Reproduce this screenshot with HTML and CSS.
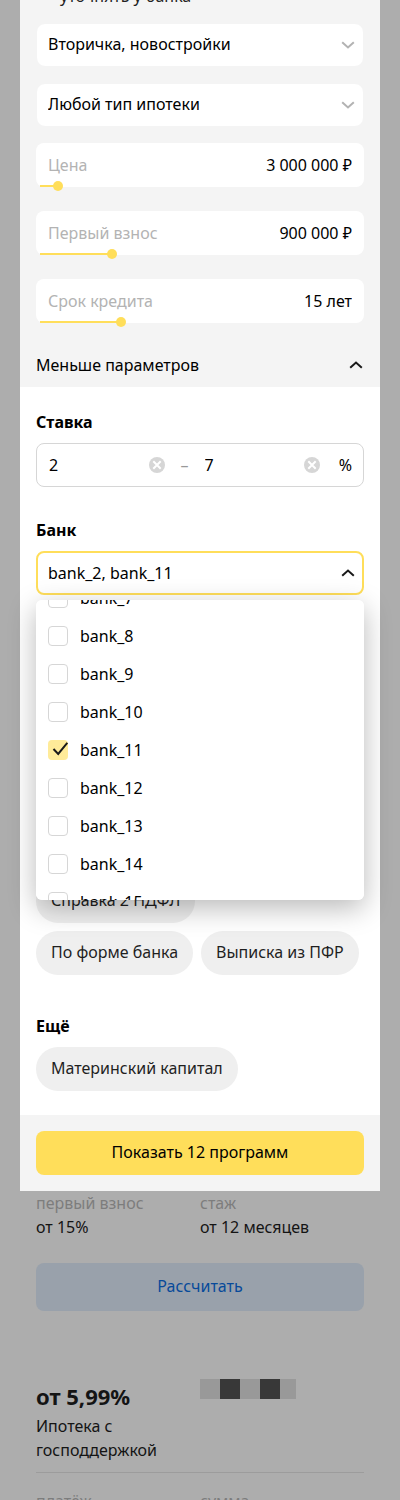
FILE: index.html
```html
<!DOCTYPE html>
<html lang="ru">
<head>
<meta charset="utf-8">
<meta name="viewport" content="width=device-width, initial-scale=1">
<title>Ипотека</title>
<link rel="stylesheet" href="styles.css">
</head>
<body>
<div class="modal" role="dialog" aria-label="Параметры">
  <div class="basic">
    <p class="note">уточнять у банка</p>
    <div class="pick">
      <select class="pick-control" aria-label="Тип жилья"><option>Вторичка, новостройки</option></select>
      <svg class="chevron muted" viewBox="0 0 14 8"><path d="M1.200 1.200 7 6.500l5.800-5.300"/></svg>
    </div>
    <div class="pick">
      <select class="pick-control" aria-label="Тип ипотеки"><option>Любой тип ипотеки</option></select>
      <svg class="chevron muted" viewBox="0 0 14 8"><path d="M1.200 1.200 7 6.500l5.800-5.300"/></svg>
    </div>
    <div class="amounts">
      <div class="amount">
        <label for="price">Цена</label>
        <input class="amount-value" id="price" type="text" value="3 000 000 ₽">
        <input class="slider" type="range" aria-label="Цена" min="0" max="100" step="any" value="5.4" style="--fill: 22px">
      </div>
      <div class="amount">
        <label for="deposit">Первый взнос</label>
        <input class="amount-value" id="deposit" type="text" value="900 000 ₽">
        <input class="slider" type="range" aria-label="Первый взнос" min="0" max="100" step="any" value="22.4" style="--fill: 76px">
      </div>
      <div class="amount">
        <label for="term">Срок кредита</label>
        <input class="amount-value" id="term" type="text" value="15 лет">
        <input class="slider" type="range" aria-label="Срок кредита" min="0" max="100" step="any" value="25.2" style="--fill: 85px">
      </div>
    </div>
    <button class="toggle" type="button">Меньше параметров
      <svg class="chevron" viewBox="0 0 14 8"><path d="M1.200 6.800 7 1.500l5.800 5.300"/></svg>
    </button>
  </div>

  <div class="extra">
    <section class="group">
      <h2>Ставка</h2>
      <div class="rate">
        <input type="text" value="2" aria-label="Ставка от">
        <button class="clear" type="button" aria-label="Очистить"><svg viewBox="0 0 16 16"><circle cx="8" cy="8" r="8"/><path d="m4.300 4.300 7.400 7.400m0-7.400-7.400 7.400"/></svg></button>
        <span class="dash">–</span>
        <input type="text" value="7" aria-label="Ставка до">
        <button class="clear" type="button" aria-label="Очистить"><svg viewBox="0 0 16 16"><circle cx="8" cy="8" r="8"/><path d="m4.300 4.300 7.400 7.400m0-7.400-7.400 7.400"/></svg></button>
        <span class="percent">%</span>
      </div>
    </section>

    <section class="group">
      <h2>Банк</h2>
      <div class="bank">
        <button class="bank-control" type="button" aria-expanded="true">bank_2, bank_11
          <svg class="chevron" viewBox="0 0 14 8"><path d="M1.200 6.800 7 1.500l5.800 5.300"/></svg>
        </button>
        <div class="menu">
          <div class="menu-list">
            <label class="option"><input type="checkbox">bank_7</label>
            <label class="option"><input type="checkbox">bank_8</label>
            <label class="option"><input type="checkbox">bank_9</label>
            <label class="option"><input type="checkbox">bank_10</label>
            <label class="option"><span class="tick"><input type="checkbox" checked><svg viewBox="0 0 20 20"><path d="m5.500 9 4.700 5L19.300 2.800"/></svg></span>bank_11</label>
            <label class="option"><input type="checkbox">bank_12</label>
            <label class="option"><input type="checkbox">bank_13</label>
            <label class="option"><input type="checkbox">bank_14</label>
            <label class="option"><input type="checkbox">bank_15</label>
          </div>
        </div>
      </div>
    </section>

    <section class="chips income">
      <button class="chip" type="button">Справка 2 НДФЛ</button>
      <button class="chip" type="button">По форме банка</button>
      <button class="chip" type="button">Выписка из ПФР</button>
    </section>

    <section class="group">
      <h2>Ещё</h2>
      <div class="chips"><button class="chip" type="button">Материнский капитал</button></div>
    </section>
  </div>

  <div class="footer"><button class="submit" type="button">Показать 12 программ</button></div>
</div>

<main class="results">
  <article class="offer">
    <dl class="facts">
      <div><dt>первый взнос</dt><dd>от 15%</dd></div>
      <div><dt>стаж</dt><dd>от 12 месяцев</dd></div>
    </dl>
    <button class="calculate" type="button">Рассчитать</button>
  </article>
  <article class="offer">
    <div class="summary">
      <div>
        <h3>от 5,99%</h3>
        <p>Ипотека с господдержкой</p>
      </div>
      <svg class="logo" viewBox="0 0 96 20" shape-rendering="crispEdges"><path class="logo-light" d="M0 0h96v20H0z"/><path class="logo-dark" d="M20 0h20v20H20zM60 0h20v20H60z"/></svg>
    </div>
    <dl class="facts more">
      <div><dt>платёж</dt></div>
      <div><dt>сумма</dt></div>
    </dl>
  </article>
</main>
</body>
</html>
```
FILE: styles.css
```css
* { box-sizing: border-box; }
html { height: 100%; overflow: hidden; }
body {
  height: 100%;
  margin: 0;
  overflow: hidden;
  background: #adadad;
  color: #000;
  font: 16px/20px "Noto Sans", "Liberation Sans", sans-serif;
}
button, input, select { font: inherit; color: inherit; margin: 0; }
button { border: 0; padding: 0; }
h2, h3, p, dl, dd { margin: 0; }

.modal { margin: 0 20px; background: #fff; }
.basic { padding: 0 16px; background: #f4f4f4; }
.note { margin-top: -14px; padding: 0 0 17px 24px; color: #222; }

.pick { display: grid; align-items: center; margin-bottom: 16px; }
.pick > * { grid-area: 1 / 1; }
.pick-control {
  width: 100%;
  height: 44px;
  padding: 0 40px 2px 11px;
  appearance: none;
  border: 1px solid #f4f4f4;
  border-radius: 9px;
  background: #fff;
}
.chevron {
  width: 14px;
  height: 8px;
  fill: none;
  stroke: #1a1a1a;
  stroke-width: 2;
}
.chevron.muted { stroke: #b3b3b3; }
.pick .chevron { justify-self: end; margin-right: 9px; pointer-events: none; }

.amounts { display: flex; flex-direction: column; gap: 24px; }
.amount {
  position: relative;
  display: flex;
  align-items: center;
  height: 44px;
  padding: 0 12px;
  border-radius: 8px;
  background: #fff;
}
.amount label { color: #b3b3b3; white-space: nowrap; }
.amount-value {
  flex: 1;
  min-width: 0;
  padding: 0;
  border: 0;
  background: none;
  text-align: right;
}
.slider {
  position: absolute;
  left: 0;
  bottom: -4px;
  width: 100%;
  height: 10px;
  appearance: none;
  background: none;
}
.slider::-webkit-slider-runnable-track {
  height: 10px;
  background: linear-gradient(#ffde5a, #ffde5a) 4px 4px / calc(var(--fill) - 4px) 2px no-repeat;
}
.slider::-webkit-slider-thumb {
  width: 10px;
  height: 10px;
  appearance: none;
  border-radius: 50%;
  background: #ffde5a;
}

.toggle {
  display: flex;
  align-items: center;
  justify-content: space-between;
  width: 100%;
  height: 44px;
  margin-top: 20px;
  padding-right: 1px;
  background: none;
}

.extra { padding: 25px 16px 24px; }
.group + .group { margin-top: 33px; }
h2 { margin-bottom: 11px; font-size: 16px; line-height: 20px; }
.rate {
  display: flex;
  align-items: center;
  height: 44px;
  padding: 0 11px 0 12px;
  border: 1px solid #d6d6d6;
  border-radius: 8px;
}
.rate input { flex: 1; min-width: 0; padding: 0; border: 0; background: none; }
.clear { display: flex; background: none; }
.clear svg { width: 16px; height: 16px; fill: #d6d6d6; stroke: #fff; stroke-width: 2; }
.clear circle { stroke: none; }
.dash { width: 40px; text-align: center; color: #999; }
.percent { width: 32px; text-align: right; }

.bank { position: relative; }
.bank-control {
  display: flex;
  align-items: center;
  justify-content: space-between;
  width: 100%;
  height: 44px;
  padding: 0 7px 0 10px;
  border: 2px solid #ffde5a;
  border-radius: 8px;
  background: #fff;
}
.menu {
  position: absolute;
  z-index: 1;
  top: 49px;
  left: 0;
  right: 0;
  height: 300px;
  overflow: hidden;
  border-radius: 6px;
  background: #fff;
}
.bank::after {
  content: "";
  position: absolute;
  top: 49px;
  left: 0;
  right: 0;
  height: 300px;
  border-radius: 6px;
  box-shadow: 0 8px 28px rgba(0, 0, 0, .28);
}
.menu-list { margin-top: -21px; }
.option { display: flex; align-items: center; gap: 12px; height: 38px; padding-left: 12px; }
.option input {
  width: 20px;
  height: 20px;
  appearance: none;
  border: 1px solid #d6d6d6;
  border-radius: 4px;
  background: #fff;
}
.option input:checked { border: 0; background: #ffeb99; }
.tick { display: grid; }
.tick > * { grid-area: 1 / 1; }
.tick svg { width: 20px; height: 20px; fill: none; stroke: #1a1a1a; stroke-width: 2; pointer-events: none; }

.chips { display: flex; flex-wrap: wrap; gap: 8px; }
.income { margin-top: 284px; }
.income + .group { margin-top: 41px; }
.chip {
  height: 44px;
  padding: 0 15px 2px;
  border-radius: 22px;
  background: #efefef;
  color: #1f1f1f;
}
.income .chip:first-child { margin-right: 100px; }

.footer { padding: 16px; background: #f4f4f4; }
.submit { width: 100%; height: 44px; padding-bottom: 2px; border-radius: 8px; background: #ffde5a; }

.results { padding: 0 36px; color: #141414; line-height: 24px; }
.facts, .summary { display: grid; grid-template-columns: 1fr 1fr; }
dt { color: #7d7d7d; }
.calculate {
  width: 100%;
  height: 48px;
  margin-top: 24px;
  padding-bottom: 2px;
  border-radius: 8px;
  background: #99a1ab;
  color: #074a9a;
}
.offer + .offer { margin-top: 68px; }
h3 { margin: 5px 0 6px; font-size: 22px; line-height: 24px; }
.logo { width: 96px; height: 20px; }
.logo-light { fill: #999; }
.logo-dark { fill: #383838; }
.more { margin-top: 10px; padding-top: 16px; border-top: 1px solid #9c9c9c; }
```
